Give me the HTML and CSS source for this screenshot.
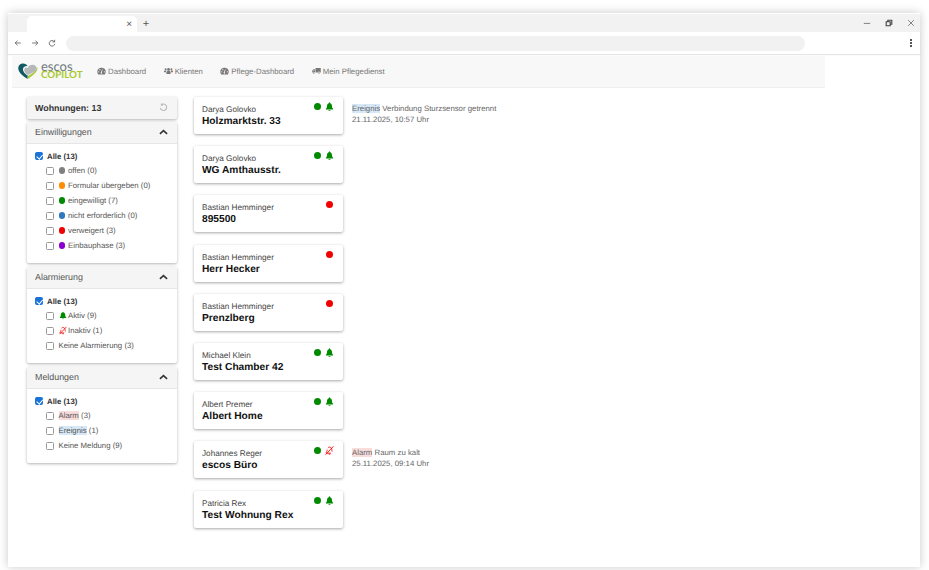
FILE: index.html
```html
<!DOCTYPE html>
<html lang="de">
<head>
    <meta charset="UTF-8">
    <title>escos Copilot</title>
    <link rel="stylesheet" href="styles.css">
</head>
<body>
    <svg class="defs" width="0" height="0">
        <symbol id="bell" viewBox="0 0 16 16">
            <path d="M8 0.500c-.6 0-1 .4-1 1v.6C4.800 2.600 3.600 4.400 3.600 6.600c0 3.200-.9 4.300-2 5.500-.4.4-.2 1.100.5 1.100h11.800c.7 0 .9-.7.5-1.100-1.100-1.200-2-2.300-2-5.500 0-2.200-1.200-4-3.400-4.500v-.6c0-.6-.4-1-1-1zM6.200 14c0 1 .8 1.700 1.800 1.700s1.800-.7 1.800-1.700z"/>
        </symbol>
        <symbol id="bell-off" viewBox="0 0 16 16">
            <path fill="none" stroke="currentColor" stroke-width="1.500" d="M5 3.500C5.800 2.500 6.800 2 8 2c2.600 0 4.200 1.900 4.200 4.600 0 1.500.2 2.500.6 3.400M3.800 6.500c0 2.900-.9 4.300-2 5.600-.2.300 0 .7.300.7h8.400M6.400 14.200c.3.800 2.900.8 3.200 0"/>
            <path fill="none" stroke="currentColor" stroke-width="1.500" d="M1 15.500L15 .5"/>
        </symbol>
        <symbol id="gauge" viewBox="0 0 16 14">
            <path d="M8 1a7.500 7.500 0 0 0-7.500 7.500c0 1.700.6 3.300 1.500 4.500h12c.9-1.200 1.500-2.800 1.500-4.500A7.500 7.500 0 0 0 8 1zM3 9.500a1.100 1.100 0 1 1 0-2.200 1.100 1.100 0 0 1 0 2.200zm2-3.700a1.100 1.100 0 1 1 0-2.200 1.100 1.100 0 0 1 0 2.200zm3 6a1.700 1.700 0 0 1-.8-3.200l1.900-4.700 1 .4-1.600 4.700A1.700 1.700 0 0 1 8 11.800zm5-2.300a1.100 1.100 0 1 1 0-2.200 1.100 1.100 0 0 1 0 2.200z"/>
        </symbol>
        <symbol id="users" viewBox="0 0 18 14">
            <circle cx="9" cy="4" r="2.800"/><circle cx="3.300" cy="3.300" r="2"/><circle cx="14.700" cy="3.300" r="2"/>
            <path d="M4.800 13V10c0-2 1.500-3 3-3h2.400c1.500 0 3 1 3 3v3zM0 9.500V8c0-1.300 1-2.200 2.300-2.200h2c.3 0 .5 0 .8.200-.7.800-1.200 1.800-1.200 3v.5zM18 9.500V8c0-1.300-1-2.200-2.300-2.200h-2c-.3 0-.5 0-.8.200.7.800 1.200 1.800 1.200 3v.5z"/>
        </symbol>
        <symbol id="truck" viewBox="0 0 18 14">
            <path d="M7 1h10.500v9H16a2 2 0 0 0-4 0H7zM1 5.500L3 3h3v7h-.6a2 2 0 0 0-3.800 0H.500V6.500zM2 5.800h3V4H3.400z"/>
            <circle cx="3.500" cy="11" r="1.500"/><circle cx="14" cy="11" r="1.500"/>
        </symbol>
    </svg>

    <div class="window">
        <div class="tabstrip">
            <div class="tab"><span class="tab-close">×</span></div>
            <span class="tab-new">+</span>
            <div class="win-controls">
                <svg class="win-icon" viewBox="0 0 10 10"><path d="M1 5.500h8" stroke="#666" fill="none"/></svg>
                <svg class="win-icon" viewBox="0 0 10 10"><path d="M1.500 3.500h5v5h-5zM3.500 3.500v-2h5v5h-2" stroke="#444" stroke-width="1.400" fill="none"/></svg>
                <svg class="win-icon" viewBox="0 0 10 10"><path d="M1.500 1.500l7 7M8.500 1.500l-7 7" stroke="#666" fill="none"/></svg>
            </div>
        </div>
        <div class="toolbar">
            <svg class="tool-icon" viewBox="0 0 10 10"><path d="M8.500 5h-7M4.500 2l-3 3 3 3" stroke="#555" fill="none"/></svg>
            <svg class="tool-icon" viewBox="0 0 10 10"><path d="M1.500 5h7M5.500 2l3 3-3 3" stroke="#555" fill="none"/></svg>
            <svg class="tool-icon" viewBox="0 0 10 10"><path d="M8 3.500A3.500 3.500 0 1 0 8.500 6M8.300 1v2.700H5.600" stroke="#555" fill="none"/></svg>
            <div class="address"></div>
            <div class="kebab"><i></i><i></i><i></i></div>
        </div>

        <nav class="navbar">
            <div class="logo">
                <svg class="logo-mark" viewBox="0 0 32 26">
                    <path d="M15.500 25C9 21 1 15 .5 8.500 0 3.500 3.500 0 8 0c3.500 0 6 1.500 7.500 4.500C12.500 4 8.500 5 8 9c-.4 4 3.500 8 7.500 10.500z" fill="#0f5a63"/>
                    <path d="M15.500 25c4-2.200 12-8 15-14 .8-1.800.9-3.500.3-5.300-1 5.500-9 12-15.300 14.300z" fill="#a9c92f"/>
                    <path d="M15.500 18.500C11.500 16 9.500 12 10 9.300c.5-2.800 3.500-3.800 5.500-1.800.8-3 3.500-5.500 7.500-5.500 4.500 0 7.300 3 6.800 6.500C28.500 13 20.500 17 15.500 18.500z" fill="#b4b8b8"/>
                </svg>
                <div class="logo-text">
                    <span class="logo-top">escos</span>
                    <span class="logo-bottom">COPILOT</span>
                </div>
            </div>
            <a class="nav-link"><svg class="nav-icon"><use href="#gauge"/></svg>Dashboard</a>
            <a class="nav-link"><svg class="nav-icon"><use href="#users"/></svg>Klienten</a>
            <a class="nav-link"><svg class="nav-icon"><use href="#gauge"/></svg>Pflege-Dashboard</a>
            <a class="nav-link"><svg class="nav-icon"><use href="#truck"/></svg>Mein Pflegedienst</a>
        </nav>

        <div class="content">
            <aside class="sidebar">
                <div class="panel-count">
                    <span>Wohnungen: 13</span>
                    <svg class="reset" viewBox="0 0 12 12"><path d="M3 2.500A4.300 4.300 0 1 1 1.700 6.500M3.200 .8v2.200h2.200" stroke="#bbb" stroke-width="1.500" fill="none"/></svg>
                </div>

                <section class="panel">
                    <header class="panel-head">Einwilligungen<svg class="chevron" viewBox="0 0 10 6"><path d="M1 5l4-3.500L9 5" fill="none" stroke="#333" stroke-width="1.800"/></svg></header>
                    <div class="panel-body">
                        <label class="row row-all"><span class="box checked"></span>Alle (13)</label>
                        <label class="row"><span class="box"></span><i class="dot grey"></i>offen (0)</label>
                        <label class="row"><span class="box"></span><i class="dot orange"></i>Formular übergeben (0)</label>
                        <label class="row"><span class="box"></span><i class="dot green"></i>eingewilligt (7)</label>
                        <label class="row"><span class="box"></span><i class="dot blue"></i>nicht erforderlich (0)</label>
                        <label class="row"><span class="box"></span><i class="dot red"></i>verweigert (3)</label>
                        <label class="row"><span class="box"></span><i class="dot purple"></i>Einbauphase (3)</label>
                    </div>
                </section>

                <section class="panel">
                    <header class="panel-head">Alarmierung<svg class="chevron" viewBox="0 0 10 6"><path d="M1 5l4-3.500L9 5" fill="none" stroke="#333" stroke-width="1.800"/></svg></header>
                    <div class="panel-body">
                        <label class="row row-all"><span class="box checked"></span>Alle (13)</label>
                        <label class="row"><span class="box"></span><svg class="row-icon icon-green"><use href="#bell"/></svg>Aktiv (9)</label>
                        <label class="row"><span class="box"></span><svg class="row-icon icon-red"><use href="#bell-off"/></svg>Inaktiv (1)</label>
                        <label class="row"><span class="box"></span>Keine Alarmierung (3)</label>
                    </div>
                </section>

                <section class="panel">
                    <header class="panel-head">Meldungen<svg class="chevron" viewBox="0 0 10 6"><path d="M1 5l4-3.500L9 5" fill="none" stroke="#333" stroke-width="1.800"/></svg></header>
                    <div class="panel-body">
                        <label class="row row-all"><span class="box checked"></span>Alle (13)</label>
                        <label class="row"><span class="box"></span><span class="tag-alarm">Alarm</span>&nbsp;(3)</label>
                        <label class="row"><span class="box"></span><span class="tag-event">Ereignis</span>&nbsp;(1)</label>
                        <label class="row"><span class="box"></span>Keine Meldung (9)</label>
                    </div>
                </section>
            </aside>

            <main class="list">
                <div class="item">
                    <div class="card">
                        <div class="card-status"><i class="dot green"></i><svg class="status-icon icon-green"><use href="#bell"/></svg></div>
                        <div class="card-person">Darya Golovko</div>
                        <div class="card-title">Holzmarktstr. 33</div>
                    </div>
                    <div class="message"><span class="tag-event">Ereignis</span> Verbindung Sturzsensor getrennt<br>21.11.2025, 10:57 Uhr</div>
                </div>
                <div class="item">
                    <div class="card">
                        <div class="card-status"><i class="dot green"></i><svg class="status-icon icon-green"><use href="#bell"/></svg></div>
                        <div class="card-person">Darya Golovko</div>
                        <div class="card-title">WG Amthausstr.</div>
                    </div>
                </div>
                <div class="item">
                    <div class="card">
                        <div class="card-status"><i class="dot red"></i></div>
                        <div class="card-person">Bastian Hemminger</div>
                        <div class="card-title">895500</div>
                    </div>
                </div>
                <div class="item">
                    <div class="card">
                        <div class="card-status"><i class="dot red"></i></div>
                        <div class="card-person">Bastian Hemminger</div>
                        <div class="card-title">Herr Hecker</div>
                    </div>
                </div>
                <div class="item">
                    <div class="card">
                        <div class="card-status"><i class="dot red"></i></div>
                        <div class="card-person">Bastian Hemminger</div>
                        <div class="card-title">Prenzlberg</div>
                    </div>
                </div>
                <div class="item">
                    <div class="card">
                        <div class="card-status"><i class="dot green"></i><svg class="status-icon icon-green"><use href="#bell"/></svg></div>
                        <div class="card-person">Michael Klein</div>
                        <div class="card-title">Test Chamber 42</div>
                    </div>
                </div>
                <div class="item">
                    <div class="card">
                        <div class="card-status"><i class="dot green"></i><svg class="status-icon icon-green"><use href="#bell"/></svg></div>
                        <div class="card-person">Albert Premer</div>
                        <div class="card-title">Albert Home</div>
                    </div>
                </div>
                <div class="item">
                    <div class="card">
                        <div class="card-status"><i class="dot green"></i><svg class="status-icon icon-red"><use href="#bell-off"/></svg></div>
                        <div class="card-person">Johannes Reger</div>
                        <div class="card-title">escos Büro</div>
                    </div>
                    <div class="message"><span class="tag-alarm">Alarm</span> Raum zu kalt<br>25.11.2025, 09:14 Uhr</div>
                </div>
                <div class="item">
                    <div class="card">
                        <div class="card-status"><i class="dot green"></i><svg class="status-icon icon-green"><use href="#bell"/></svg></div>
                        <div class="card-person">Patricia Rex</div>
                        <div class="card-title">Test Wohnung Rex</div>
                    </div>
                </div>
            </main>
        </div>
    </div>
</body>
</html>
```

FILE: styles.css
```css
* {
    box-sizing: border-box;
}

html, body {
    height: 100%;
}

body {
    margin: 0;
    padding: 13px 9px 3px 8px;
    background-color: #fff;
    font-family: "Liberation Sans", Arial, sans-serif;
    font-size: 7.8px;
    text-rendering: geometricPrecision;
    color: #444;
    overflow: hidden;
}

.defs {
    display: block;
    height: 0;
}

.window {
    height: 554px;
    background-color: #fff;
    box-shadow: 0 0 9px rgba(0, 0, 0, 0.22);
    display: flex;
    flex-direction: column;
}

/* browser chrome */
.tabstrip {
    height: 19px;
    border-top: 1px solid #fff;
    background-color: #f2f2f2;
    display: flex;
    align-items: flex-end;
    padding-left: 19px;
}

.tab {
    width: 110px;
    height: 16px;
    background-color: #fff;
    border-radius: 5px 5px 0 0;
    display: flex;
    align-items: center;
    justify-content: flex-end;
    padding-right: 5px;
}

.tab-close {
    font-size: 10px;
    color: #555;
}

.tab-new {
    width: 18px;
    height: 16px;
    font-size: 11px;
    line-height: 16px;
    text-align: center;
    color: #555;
}

.win-controls {
    margin-left: auto;
    height: 18px;
    display: flex;
    align-items: center;
    gap: 14px;
    padding-right: 5px;
}

.win-icon {
    width: 8px;
    height: 8px;
}

.toolbar {
    height: 22px;
    background-color: #fff;
    box-shadow: 0 1px 1px rgba(0, 0, 0, 0.1);
    display: flex;
    align-items: center;
    padding-left: 6px;
    gap: 9px;
    position: relative;
}

.tool-icon {
    width: 8px;
    height: 8px;
}

.address {
    width: 739px;
    height: 15px;
    margin-left: 1px;
    background-color: #f1f1f1;
    border-radius: 8px;
}

.kebab {
    margin-left: auto;
    margin-right: 8px;
    display: flex;
    flex-direction: column;
    gap: 1px;
}

.kebab i {
    width: 2px;
    height: 2px;
    background-color: #555;
}

/* app navbar */
.navbar {
    width: 813px;
    margin: 2px 0 0 4px;
    height: 32px;
    background-color: #f8f8f8;
    border-bottom: 1px solid #eee;
    display: flex;
    align-items: center;
    padding: 0 0 1px 6px;
}

.logo {
    width: 79px;
    display: flex;
    align-items: center;
    gap: 3px;
}

.logo-mark {
    width: 20px;
    height: 17px;
}

.logo-text {
    display: flex;
    flex-direction: column;
    line-height: 9.500px;
}

.logo-top {
    font-family: Lato, sans-serif;
    font-size: 13px;
    color: #6f7a7c;
}

.logo-bottom {
    font-family: Lato, sans-serif;
    font-size: 9.800px;
    font-weight: bold;
    color: #a9c92f;
}

.nav-link {
    display: flex;
    align-items: center;
    gap: 2px;
    margin-right: 17.500px;
    color: #777;
}

.nav-icon {
    width: 9px;
    height: 8px;
    fill: #777;
}

/* main area */
.content {
    flex: 1;
    display: flex;
    padding: 9px 0 0 19px;
}

.sidebar {
    width: 150px;
    margin-right: 17px;
}

.panel-count {
    height: 22px;
    background-color: #f5f5f5;
    border-radius: 2px;
    box-shadow: 0 1px 3px rgba(0, 0, 0, 0.3);
    display: flex;
    align-items: center;
    justify-content: space-between;
    padding: 0 9px 1px 8px;
    margin-bottom: 3px;
    font-size: 8.900px;
    font-weight: bold;
    color: #333;
}

.reset {
    width: 9px;
    height: 9px;
}

.panel {
    background-color: #fff;
    border-radius: 2px;
    box-shadow: 0 1px 3px rgba(0, 0, 0, 0.3);
    margin-bottom: 4px;
}

.panel-head {
    height: 22px;
    background-color: #f5f5f5;
    border-bottom: 1px solid #e6e6e6;
    border-radius: 2px 2px 0 0;
    display: flex;
    align-items: center;
    justify-content: space-between;
    padding: 0 9px 1px 8px;
    font-size: 8.900px;
    color: #555;
}

.chevron {
    width: 9px;
    height: 6px;
}

.panel-body {
    padding: 5px 0 10px 8px;
}

.row {
    height: 15px;
    display: flex;
    align-items: center;
    padding-left: 11px;
    color: #555;
}

.row-all {
    height: 14px;
    padding-left: 0;
    font-weight: bold;
    color: #333;
}

.box {
    width: 8px;
    height: 8px;
    border: 1px solid #999;
    border-radius: 1.500px;
    margin-right: 4.500px;
    background-color: #fff;
}

.row-all .box {
    margin-right: 4px;
}

.box.checked {
    position: relative;
    border-color: #1a73d8;
    background-color: #1a73d8;
}

.box.checked::after {
    content: "";
    position: absolute;
    left: 1.500px;
    top: 0;
    width: 2.500px;
    height: 4.500px;
    border: solid #fff;
    border-width: 0 1.200px 1.200px 0;
    transform: rotate(40deg);
}

.dot {
    display: inline-block;
    width: 6.500px;
    height: 6.500px;
    border-radius: 50%;
    margin-right: 3px;
}

.grey { background-color: #808080; }
.orange { background-color: #ff8c00; }
.green { background-color: #008a00; }
.blue { background-color: #2f78bd; }
.red { background-color: #f00000; }
.purple { background-color: #8a00d4; }

.row-icon {
    width: 8px;
    height: 9px;
    margin-right: 1.500px;
}

.icon-green {
    fill: #008a00;
    color: #008a00;
}

.icon-red {
    fill: none;
    color: #f00000;
}

.tag-alarm {
    background-color: #f8dcdc;
}

.tag-event {
    background-color: #d6e8f7;
}

/* apartment list */
.list {
    display: flex;
    flex-direction: column;
    gap: 12.200px;
}

.item {
    display: flex;
    gap: 9px;
}

.card {
    width: 149px;
    height: 37px;
    background-color: #fff;
    border-radius: 2px;
    box-shadow: 0 1px 3px rgba(0, 0, 0, 0.35);
    padding: 8px 8px 0;
    position: relative;
}

.card-status {
    position: absolute;
    top: 5px;
    right: 9px;
    height: 9px;
    display: flex;
    align-items: center;
    gap: 4px;
}

.card-status .dot {
    width: 7px;
    height: 7px;
    margin-right: 0;
}

.card-status .dot:only-child {
    margin-right: 1px;
}

.status-icon {
    width: 9px;
    height: 9px;
}

.card-person {
    font-size: 8.200px;
    line-height: 10px;
    color: #444;
}

.card-title {
    font-size: 10.200px;
    font-weight: bold;
    line-height: 13px;
    color: #111;
}

.message {
    padding-top: 6px;
    line-height: 11px;
    color: #666;
}
```
